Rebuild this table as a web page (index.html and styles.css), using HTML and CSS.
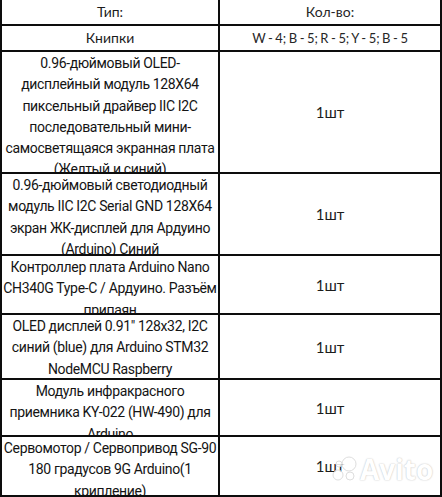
FILE: index.html
```html
<!DOCTYPE html>
<html lang="ru">
<head>
<meta charset="utf-8">
<link rel="stylesheet" href="styles.css">
</head>
<body>
<div class="sheet">
  <div class="cell head">Тип:</div>
  <div class="cell head alt">Кол-во:</div>
  <div class="cell head">Книпки</div>
  <div class="cell head alt tight">W - 4; B - 5; R - 5; Y - 5; B - 5</div>

  <div class="cell name">0.96-дюймовый OLED-<br>дисплейный модуль 128X64<br>пиксельный драйвер IIC I2C<br>последовательный мини-<br>самосветящаяся экранная плата<br>(Желтый и синий)</div>
  <div class="cell qty">1шт</div>

  <div class="cell name">0.96-дюймовый светодиодный<br>модуль IIC I2C Serial GND 128X64<br>экран ЖК-дисплей для Ардуино<br>(Arduino) Синий</div>
  <div class="cell qty">1шт</div>

  <div class="cell name">Контроллер плата Arduino Nano<br>CH340G Type-C / Ардуино. Разъём<br>припаян</div>
  <div class="cell qty">1шт</div>

  <div class="cell name">OLED дисплей 0.91" 128x32, I2C<br>синий (blue) для Arduino STM32<br>NodeMCU Raspberry</div>
  <div class="cell qty">1шт</div>

  <div class="cell name">Модуль инфракрасного<br>приемника KY-022 (HW-490) для<br>Arduino</div>
  <div class="cell qty">1шт</div>

  <div class="cell name">Сервомотор / Сервопривод SG-90<br>180 градусов 9G Arduino(1<br>крипление)</div>
  <div class="cell qty">1шт</div>
</div>
<div class="watermark">
  <svg class="wm-logo" width="26" height="26" viewBox="0 0 26 26">
    <circle cx="17" cy="8" r="7"/>
    <circle cx="6" cy="19" r="5"/>
    <circle cx="18" cy="20" r="4"/>
    <circle cx="7" cy="8" r="3"/>
  </svg>
  <span class="wm-text">Avito</span>
</div>
</body>
</html>
```
FILE: styles.css
```css
html, body {
  margin: 0;
  padding: 0;
  background: #ffffff;
}
body {
  width: 442px;
  height: 497px;
  overflow: hidden;
  position: relative;
}
.sheet {
  display: grid;
  grid-template-columns: 216px 220px;
  grid-template-rows: 24px 24px 120px 80px 57px 63px 55px 58px;
  column-gap: 2px;
  row-gap: 2px;
  padding: 0 2px 2px 2px;
  background: #0d0d0d;
  width: 442px;
  box-sizing: border-box;
}
.cell {
  background: #ffffff;
  overflow: hidden;
  color: #1c1c1c;
  text-align: center;
}
.head {
  font-family: "Lato", "Liberation Sans", sans-serif;
  font-size: 14px;
  line-height: 24px;
}
.head.alt {
  color: #262626;
}
.head.tight {
  font-size: 13px;
  letter-spacing: -0.1px;
  word-spacing: -0.6px;
}
.name {
  font-family: "Roboto", "Noto Sans", sans-serif;
  font-size: 14px;
  line-height: 21.3px;
  padding-top: 1px;
  white-space: nowrap;
  letter-spacing: -0.35px;
  color: #141414;
}
.qty {
  font-family: "Lato", "Liberation Sans", sans-serif;
  font-size: 15px;
  display: flex;
  align-items: center;
  justify-content: center;
}
.watermark {
  position: absolute;
  left: 332px;
  top: 454px;
  display: flex;
  align-items: center;
  gap: 2px;
  opacity: 0.85;
}
.wm-logo circle {
  fill: #ffffff;
  stroke: #d9d9d9;
  stroke-width: 1;
}
.wm-text {
  font-family: "Open Sans", "Noto Sans", sans-serif;
  font-weight: 700;
  font-size: 28px;
  color: #ffffff;
  text-shadow: 0 0 1px #bdbdbd, 0 0 2px #cfcfcf;
  line-height: 30px;
}
```
